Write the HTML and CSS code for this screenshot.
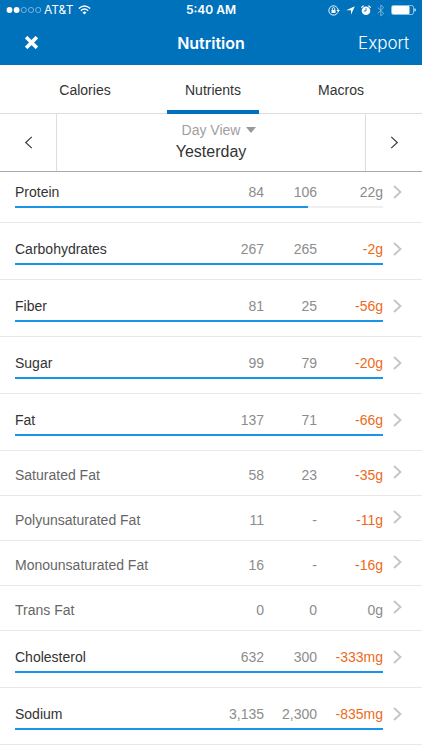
FILE: index.html
```html
<!DOCTYPE html>
<html lang="en">

<head>
  <meta charset="utf-8">
  <meta name="viewport" content="width=device-width, initial-scale=1">
  <title>Nutrition</title>
  <link rel="stylesheet" href="styles.css">
</head>

<body>
  <!-- shared chevron -->
  <svg width="0" height="0" class="defs" aria-hidden="true">
    <symbol id="chevron" viewBox="0 0 9 14">
      <path d="M1 1l6.5 6L1 13" fill="none" stroke="currentColor" />
    </symbol>
  </svg>

  <header class="topBar">
    <div class="statusBar">
      <div class="carrier">
        <svg width="36" height="8" viewBox="0 0 36 8" aria-hidden="true">
          <circle cx="3.5" cy="4" r="2.9" fill="#fff" />
          <circle cx="10.6" cy="4" r="2.9" fill="#fff" />
          <g fill="none" stroke="#fff" stroke-width=".6" opacity=".75">
            <circle cx="17.8" cy="4" r="2.6" />
            <circle cx="25" cy="4" r="2.6" />
            <circle cx="32.2" cy="4" r="2.6" />
          </g>
        </svg>
        <span>AT&amp;T</span>
        <svg class="wifi" width="13" height="10" viewBox="0 0 13 10" aria-hidden="true">
          <g fill="none" stroke="#fff" stroke-width="1.4">
            <path d="M.8 3.5Q6.5-1.300 12.2 3.5" />
            <path d="M2.8 5.7Q6.5 2.500 10.2 5.7" />
          </g>
          <path d="M4.5 7.4Q6.500 5.8 8.5 7.4L6.5 9.5z" fill="#fff" />
        </svg>
      </div>
      <div class="time">5:40 AM</div>
      <div class="statusIcons">
        <svg width="12" height="11" viewBox="0 0 12 11" aria-hidden="true">
          <path d="M9.8 7.4A4.7 4.7 0 1 1 10.2 5.2" fill="none" stroke="#fff" stroke-width=".9" />
          <path d="M8.5 5h3.4L10.2 7.2z" fill="#fff" />
          <rect x="3.500" y="5" width="4" height="3" fill="#fff" />
          <path d="M4.3 5V3.8a1.2 1.2 0 0 1 2.4 0V5" fill="none" stroke="#fff" stroke-width=".9" />
        </svg>
        <svg width="9" height="9" viewBox="0 0 9 9" aria-hidden="true">
          <path d="M8.8.3L5 8.7V4.200H.3z" fill="#fff" />
        </svg>
        <svg width="10" height="11" viewBox="0 0 10 11" aria-hidden="true">
          <circle cx="5" cy="5.8" r="4.3" fill="#fff" />
          <path d="M.4 2.8A4 4 0 0 1 2.8.7M9.6 2.8A4 4 0 0 0 7.2.7" fill="none" stroke="#fff" stroke-width="1.2" />
          <path d="M5 3.2V6H2.9" fill="none" stroke="#0072bc" stroke-width=".9" />
        </svg>
        <svg class="bluetooth" width="8" height="13" viewBox="0 0 8 13" aria-hidden="true">
          <path d="M.7 3.5l6 5.8L3.8 12V1l2.900 2.6-6 5.9" fill="none" stroke="#fff" stroke-width=".9" />
        </svg>
        <svg width="25" height="10" viewBox="0 0 25 10" aria-hidden="true">
          <rect x=".5" y=".5" width="22" height="9" rx="1.8" fill="none" stroke="#fff" stroke-width=".7" opacity=".8" />
          <rect x="1" y="1" width="17.5" height="8" rx="1" fill="#fff" />
          <path d="M23.5 3.3q1.3.3 1.3 1.7t-1.3 1.7z" fill="#fff" />
        </svg>
      </div>
    </div>
    <div class="titleBar">
      <button class="close" aria-label="Close">
        <svg width="13" height="13" viewBox="0 0 13 13" aria-hidden="true">
          <path d="M2.4 2.4l8.2 8.2M10.6 2.4l-8.2 8.2" stroke="#fff" stroke-width="3.6" stroke-linecap="square" stroke-linejoin="round" />
        </svg>
      </button>
      <h1>Nutrition</h1>
      <button class="export">Export</button>
    </div>
  </header>

  <nav class="tabs">
    <button>Calories</button>
    <button class="active">Nutrients</button>
    <button>Macros</button>
  </nav>

  <div class="dayPicker">
    <button class="prev" aria-label="Previous day"><svg width="9" height="13"><use href="#chevron" /></svg></button>
    <button class="day">
      <span class="view">Day View
        <svg width="10" height="6" viewBox="0 0 10 6" aria-hidden="true"><path d="M0 0h10L5 6z" fill="#999" /></svg>
      </span>
      <span>Yesterday</span>
    </button>
    <button class="next" aria-label="Next day"><svg width="9" height="13"><use href="#chevron" /></svg></button>
  </div>

  <table class="nutrients">
    <tbody>
      <tr>
        <th scope="row">Protein</th>
        <td>84</td>
        <td>106</td>
        <td>22g</td>
        <td class="more"><svg width="9" height="14"><use href="#chevron" /></svg></td>
        <td class="bar"><div style="width: 79.5%"></div></td>
      </tr>
      <tr>
        <th scope="row">Carbohydrates</th>
        <td>267</td>
        <td>265</td>
        <td class="over">-2g</td>
        <td class="more"><svg width="9" height="14"><use href="#chevron" /></svg></td>
        <td class="bar"><div style="width: 100%"></div></td>
      </tr>
      <tr>
        <th scope="row">Fiber</th>
        <td>81</td>
        <td>25</td>
        <td class="over">-56g</td>
        <td class="more"><svg width="9" height="14"><use href="#chevron" /></svg></td>
        <td class="bar"><div style="width: 100%"></div></td>
      </tr>
      <tr>
        <th scope="row">Sugar</th>
        <td>99</td>
        <td>79</td>
        <td class="over">-20g</td>
        <td class="more"><svg width="9" height="14"><use href="#chevron" /></svg></td>
        <td class="bar"><div style="width: 100%"></div></td>
      </tr>
      <tr>
        <th scope="row">Fat</th>
        <td>137</td>
        <td>71</td>
        <td class="over">-66g</td>
        <td class="more"><svg width="9" height="14"><use href="#chevron" /></svg></td>
        <td class="bar"><div style="width: 100%"></div></td>
      </tr>
      <!-- fat breakdown, no bars -->
      <tr class="sub">
        <th scope="row">Saturated Fat</th>
        <td>58</td>
        <td>23</td>
        <td class="over">-35g</td>
        <td class="more"><svg width="9" height="14"><use href="#chevron" /></svg></td>
      </tr>
      <tr class="sub">
        <th scope="row">Polyunsaturated Fat</th>
        <td>11</td>
        <td>-</td>
        <td class="over">-11g</td>
        <td class="more"><svg width="9" height="14"><use href="#chevron" /></svg></td>
      </tr>
      <tr class="sub">
        <th scope="row">Monounsaturated Fat</th>
        <td>16</td>
        <td>-</td>
        <td class="over">-16g</td>
        <td class="more"><svg width="9" height="14"><use href="#chevron" /></svg></td>
      </tr>
      <tr class="sub">
        <th scope="row">Trans Fat</th>
        <td>0</td>
        <td>0</td>
        <td>0g</td>
        <td class="more"><svg width="9" height="14"><use href="#chevron" /></svg></td>
      </tr>
      <tr>
        <th scope="row">Cholesterol</th>
        <td>632</td>
        <td>300</td>
        <td class="over">-333mg</td>
        <td class="more"><svg width="9" height="14"><use href="#chevron" /></svg></td>
        <td class="bar"><div style="width: 100%"></div></td>
      </tr>
      <tr>
        <th scope="row">Sodium</th>
        <td>3,135</td>
        <td>2,300</td>
        <td class="over">-835mg</td>
        <td class="more"><svg width="9" height="14"><use href="#chevron" /></svg></td>
        <td class="bar"><div style="width: 100%"></div></td>
      </tr>
    </tbody>
  </table>
</body>

</html>
```
FILE: styles.css
```css
body {
  margin: 0;
  background: #fff;
  color: #333;
  font-family: "Liberation Sans", Arial, sans-serif;
  font-size: 14px;
  line-height: 20px;
}

button {
  background: none;
  border: none;
  padding: 0;
  color: inherit;
  font: inherit;
  cursor: pointer;
}

svg {
  display: block;
}

.defs {
  position: absolute;
}

/* header */
.topBar {
  background: #0072bc;
  color: #fff;
  font-family: Inter, "Liberation Sans", sans-serif;
}

.statusBar {
  display: grid;
  grid-template-columns: 1fr auto 1fr;
  align-items: center;
  height: 20px;
  padding: 0 6px;
  font-size: 12px;
}

.carrier,
.statusIcons {
  display: flex;
  align-items: center;
}

.wifi {
  margin-left: 5px;
}

.carrier span {
  margin-left: 2px;
}

.time {
  font-weight: 600;
}

.statusIcons {
  justify-content: flex-end;
  gap: 6px;
}

.bluetooth {
  opacity: 0.5;
}

.titleBar {
  display: grid;
  grid-template-columns: 1fr auto 1fr;
  align-items: center;
  height: 45px;
  padding: 0 13px;
}

.titleBar h1 {
  margin: 0;
  font-size: 16px;
  font-weight: 600;
}

.close {
  justify-self: start;
  padding: 12px;
}

.export {
  justify-self: end;
  font-size: 17px;
  font-weight: 300;
}

/* tabs */
.tabs {
  display: grid;
  grid-template-columns: repeat(3, 1fr);
  height: 48px;
  padding: 0 17px 0 21px;
  border-bottom: 1px solid #ddd;
}

.tabs button {
  margin: 0 18px -1px;
  border-top: 4px solid transparent;
  border-bottom: 4px solid transparent;
}

.tabs .active {
  border-bottom-color: #0072bc;
}

.dayPicker {
  position: relative;
  z-index: 1;
  display: flex;
  height: 57px;
  background: #fff;
  border-bottom: 1px solid #aaa;
}

.prev,
.next {
  width: 57px;
  box-sizing: border-box;
  display: flex;
  justify-content: center;
  align-items: center;
  stroke-width: 1.2;
}

.prev {
  border-right: 1px solid #ddd;
}

.prev svg {
  transform: scaleX(-1);
}

.next {
  border-left: 1px solid #ddd;
}

.day {
  flex-grow: 1;
  display: flex;
  flex-direction: column;
  align-items: center;
  justify-content: center;
  gap: 2px;
  padding-bottom: 4px;
  font-size: 16px;
}

.view {
  display: flex;
  align-items: center;
  gap: 6px;
  padding-left: 16px;
  color: #a0a0a0;
  font-size: 14px;
}

/* list, scrolled slightly under the day picker */
.nutrients,
.nutrients tbody {
  display: block;
}

.nutrients {
  margin-top: -6px;
}

.nutrients tr {
  display: grid;
  grid-template-columns: 1fr 53px 53px 66px 19px;
  row-gap: 4px;
  padding: 16px 20px 14px 15px;
  border-bottom: 1px solid #e8e8e8;
}

.nutrients th,
.nutrients td {
  padding: 0;
  font-weight: normal;
  text-align: right;
  color: #8c8c8c;
}

.nutrients th {
  text-align: left;
  color: #333;
}

.nutrients .over {
  color: #ee6a1a;
}

.nutrients .more {
  grid-row: 1;
  grid-column: 5;
  align-self: center;
  justify-self: end;
  color: #c4c4c8;
  stroke-width: 1.8;
}

.nutrients .bar {
  grid-row: 2;
  grid-column: 1 / 5;
  height: 2px;
  background: #efeff4;
}

.bar div {
  height: 2px;
  background: #1a94e8;
}

.nutrients .sub {
  row-gap: 0;
  padding-top: 14px;
  padding-bottom: 10px;
}

.nutrients .sub th {
  color: #666;
}

.nutrients .sub .more {
  align-self: start;
}
```
